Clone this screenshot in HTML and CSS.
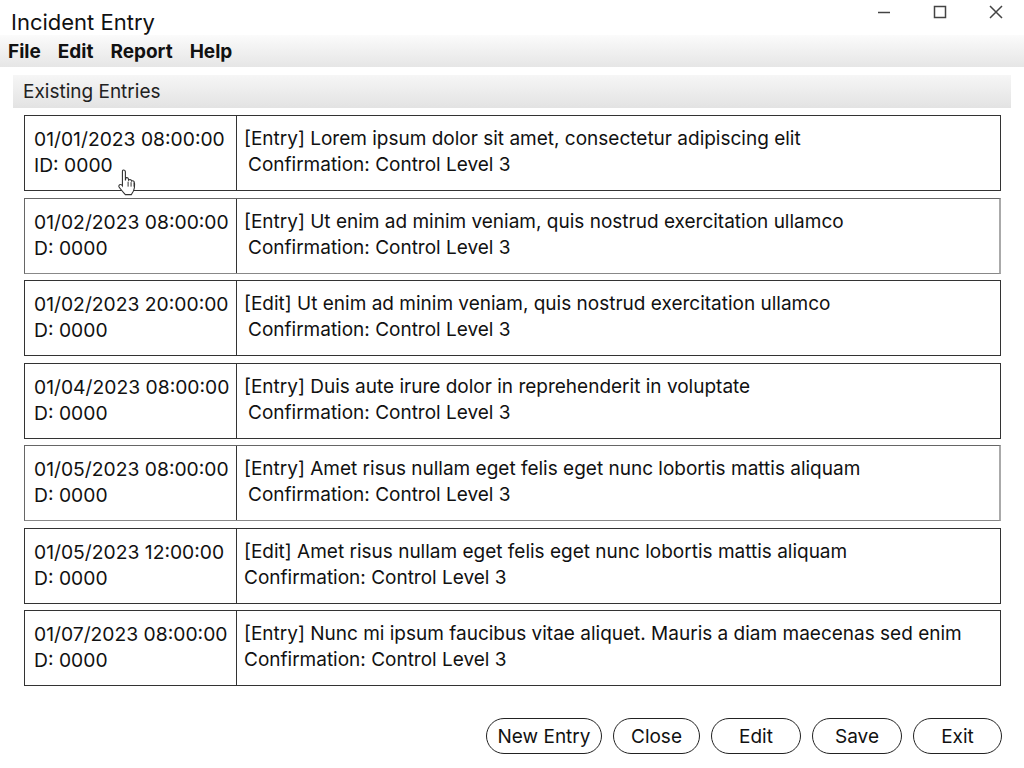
FILE: index.html
```html
<!DOCTYPE html>
<html>
<head>
<meta charset="utf-8">
<link rel="stylesheet" href="styles.css">
</head>
<body>
<div class="window">
  <div class="titlebar">
    <div class="title">Incident Entry</div>
    <div class="controls">
      <svg class="ctl" width="16" height="16" viewBox="0 0 16 16"><path d="M2 8.5H14" stroke="#444" stroke-width="1.5"/></svg>
      <svg class="ctl" width="16" height="16" viewBox="0 0 16 16"><rect x="2.5" y="2.5" width="11" height="11" fill="none" stroke="#444" stroke-width="1.5"/></svg>
      <svg class="ctl" width="16" height="16" viewBox="0 0 16 16"><path d="M2 2L14 14M14 2L2 14" stroke="#444" stroke-width="1.5"/></svg>
    </div>
  </div>
  <div class="menubar">
    <span class="menu">File</span>
    <span class="menu">Edit</span>
    <span class="menu">Report</span>
    <span class="menu">Help</span>
  </div>
  <div class="section">Existing Entries</div>
  <div class="list">
    <div class="row">
      <div class="left"><div>01/01/2023 08:00:00</div><div>ID: 0000</div></div>
      <div class="right"><div>[Entry] Lorem ipsum dolor sit amet, consectetur adipiscing elit</div><div class="conf">Confirmation: Control Level 3</div></div>
    </div>
    <div class="row soft">
      <div class="left"><div>01/02/2023 08:00:00</div><div>D: 0000</div></div>
      <div class="right"><div>[Entry] Ut enim ad minim veniam, quis nostrud exercitation ullamco</div><div class="conf">Confirmation: Control Level 3</div></div>
    </div>
    <div class="row">
      <div class="left"><div>01/02/2023 20:00:00</div><div>D: 0000</div></div>
      <div class="right"><div>[Edit] Ut enim ad minim veniam, quis nostrud exercitation ullamco</div><div class="conf">Confirmation: Control Level 3</div></div>
    </div>
    <div class="row">
      <div class="left"><div>01/04/2023 08:00:00</div><div>D: 0000</div></div>
      <div class="right"><div>[Entry] Duis aute irure dolor in reprehenderit in voluptate</div><div class="conf">Confirmation: Control Level 3</div></div>
    </div>
    <div class="row soft">
      <div class="left"><div>01/05/2023 08:00:00</div><div>D: 0000</div></div>
      <div class="right"><div>[Entry] Amet risus nullam eget felis eget nunc lobortis mattis aliquam</div><div class="conf">Confirmation: Control Level 3</div></div>
    </div>
    <div class="row">
      <div class="left"><div>01/05/2023 12:00:00</div><div>D: 0000</div></div>
      <div class="right flat"><div>[Edit] Amet risus nullam eget felis eget nunc lobortis mattis aliquam</div><div class="conf">Confirmation: Control Level 3</div></div>
    </div>
    <div class="row">
      <div class="left"><div>01/07/2023 08:00:00</div><div>D: 0000</div></div>
      <div class="right flat"><div>[Entry] Nunc mi ipsum faucibus vitae aliquet. Mauris a diam maecenas sed enim</div><div class="conf">Confirmation: Control Level 3</div></div>
    </div>
  </div>
  <div class="buttons">
    <button class="btn w-new">New Entry</button>
    <button class="btn w-close">Close</button>
    <button class="btn w-edit">Edit</button>
    <button class="btn w-save">Save</button>
    <button class="btn w-exit">Exit</button>
  </div>
  <svg class="cursor" width="21" height="28" viewBox="0 0 17 22.5">
    <path d="M6 1.5c1 0 1.6.7 1.6 1.6V10l.4-2.2c.9-.3 1.8.1 2 1l.2.9c.5-.7 1.6-.7 2.1 0l.3.8c.6-.5 1.6-.4 2 .4.4.8.5 3 .3 5-.3 2.5-1.5 4.3-2.5 5.6H7.6C6.6 20.3 3.5 17 2.5 15.3c-.5-.9 0-1.9 1-2 .7-.1 1.3.4 1.7 1V3.1c0-.9.1-1.6.8-1.6z" fill="#fff" stroke="#333" stroke-width="0.9"/>
    <path d="M9.8 11v4M12.2 11.4v3.6M14.6 11.8v3.2" stroke="#333" stroke-width="0.8"/>
  </svg>
</div>
</body>
</html>
```

FILE: styles.css
```css
* { box-sizing: border-box; }
html, body { margin: 0; padding: 0; background: #fff; }
body {
  font-family: "Inter", "Open Sans", sans-serif;
  color: #111;
  width: 1024px;
  height: 768px;
  overflow: hidden;
}
.window { position: relative; width: 1024px; height: 768px; }
.titlebar {
  height: 35px;
  display: flex;
  justify-content: space-between;
  align-items: flex-start;
}
.title {
  font-size: 22px;
  padding: 9px 0 0 11px;
  line-height: 26px;
  color: #111;
}
.controls {
  display: flex;
  gap: 40px;
  padding: 4px 20px 0 0;
}
.ctl { display: block; }
.menubar {
  height: 32px;
  background: linear-gradient(#fbfbfb, #e6e6e6);
  display: flex;
  align-items: center;
  gap: 17px;
  padding-left: 8px;
}
.menu { font-weight: 700; font-size: 19px; color: #111; }
.section {
  margin: 8px 13px 0 13px;
  height: 33px;
  background: linear-gradient(#f6f6f6, #e3e3e3);
  font-size: 19px;
  line-height: 33px;
  padding-left: 10px;
  color: #222;
}
.list {
  display: flex;
  flex-direction: column;
  gap: 6.5px;
  margin: 7px 23px 0 24px;
}
.row {
  height: 76px;
  border: 1px solid #333;
  display: flex;
}
.row.soft { border-color: #666; border-right: 2px solid #aaa; border-bottom-color: #888; }
.left {
  width: 212px;
  border-right: 1px solid #333;
  padding: 10px 0 0 9px;
  font-size: 19.3px;
  line-height: 26px;
  white-space: nowrap;
}
.right {
  flex: 1;
  padding: 10px 0 0 7px;
  font-size: 19px;
  line-height: 26px;
  white-space: nowrap;
}
.right .conf { padding-left: 4px; }
.right.flat .conf { padding-left: 0; }
.buttons {
  display: flex;
  justify-content: flex-end;
  gap: 11px;
  margin: 32px 22px 0 0;
}
.btn {
  height: 36px;
  border: 1px solid #222;
  border-radius: 18px;
  background: #fff;
  font-family: inherit;
  font-size: 19px;
  color: #111;
  padding: 0;
}
.w-new { width: 116px; }
.w-close { width: 87px; }
.w-edit { width: 90px; }
.w-save { width: 90px; }
.w-exit { width: 89px; }
.cursor { position: absolute; left: 116px; top: 168px; }
```
